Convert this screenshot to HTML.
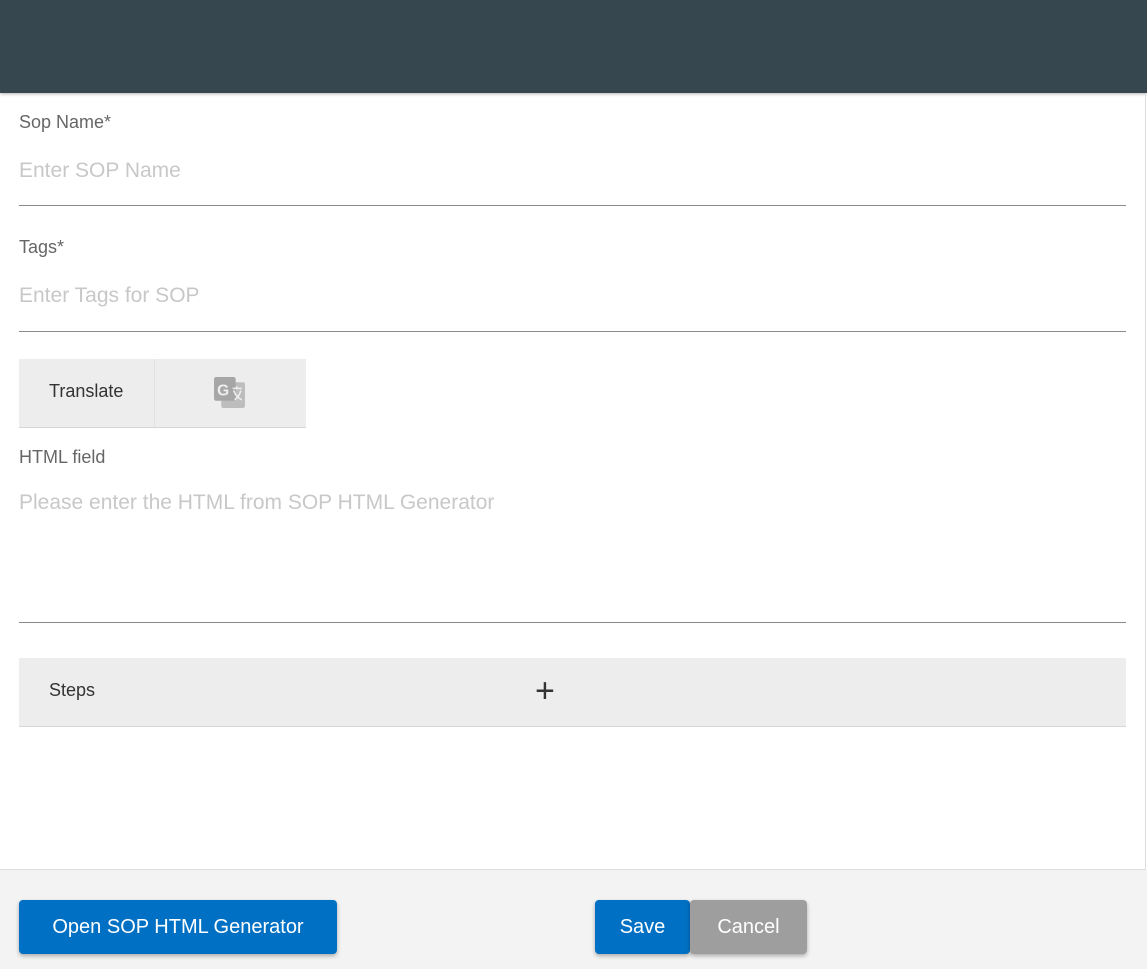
<!DOCTYPE html>
<html><head><style>
*{box-sizing:border-box;margin:0;padding:0}
body{width:1147px;height:969px;overflow:hidden;font-family:"Liberation Sans",Roboto,sans-serif;background:#fff;position:relative}
.hdr{position:absolute;left:0;top:0;width:1147px;height:93px;background:#37474f;box-shadow:0 1px 3px rgba(0,0,0,.3)}
.main{position:absolute;left:0;top:93px;width:1146px;height:777px;border-right:1px solid #ddd;border-bottom:1px solid #ddd}
.lbl{position:absolute;left:19px;font-size:18px;color:#666}
.ph{position:absolute;left:19px;font-size:21px;color:#c8c8c8}
.line{position:absolute;left:19px;width:1107px;height:1px;background:#8a8a8a}
.bar{position:absolute;left:19px;background:#ededed;border-bottom:1px solid #d6d6d6}
.foot{position:absolute;left:0;top:870px;width:1147px;height:99px;background:#f3f3f3}
.btn{position:absolute;top:900px;height:54px;border-radius:4px;color:#fff;font-size:20px;display:flex;align-items:center;justify-content:center;box-shadow:0 2px 4px rgba(0,0,0,.3)}
</style></head><body>
<div class="hdr"></div>
<div class="main"></div>
<div class="lbl" style="top:112px">Sop Name*</div>
<div class="ph" style="top:159px">Enter SOP Name</div>
<div class="line" style="top:205px"></div>
<div class="lbl" style="top:237px">Tags*</div>
<div class="ph" style="top:284px">Enter Tags for SOP</div>
<div class="line" style="top:331px"></div>
<div class="bar" style="top:359px;width:287px;height:69px">
<div style="position:absolute;left:30px;top:22px;font-size:18px;color:#333">Translate</div>
<div style="position:absolute;left:135px;top:0;width:1px;height:68px;background:#e2e2e2"></div>
<svg style="position:absolute;left:194px;top:17px" width="33" height="33" viewBox="0 0 32 32"><rect x="8" y="6" width="23" height="25" rx="2" fill="#bdbdbd"/><rect x="1" y="1" width="21" height="23" rx="2" fill="#a6a6a6"/><text x="4" y="19" font-size="15" font-weight="bold" fill="#eee" font-family="Liberation Sans">G</text><path d="M19 12h9M23 10v3M20 14c2 5 5 8 8 9M27 14c-1 4-3 7-6 9" stroke="#eee" stroke-width="1.5" fill="none"/></svg>
</div>
<div class="lbl" style="top:447px">HTML field</div>
<div class="ph" style="top:491px">Please enter the HTML from SOP HTML Generator</div>
<div class="line" style="top:622px"></div>
<div class="bar" style="top:658px;width:1107px;height:69px">
<div style="position:absolute;left:30px;top:22px;font-size:18px;color:#333">Steps</div>
<div style="position:absolute;left:516px;top:14px;font-size:34px;color:#333;font-weight:300">+</div>
</div>
<div class="foot"></div>
<div class="btn" style="left:19px;width:318px;background:#0070c4">Open SOP HTML Generator</div>
<div class="btn" style="left:595px;width:95px;background:#0070c4">Save</div>
<div class="btn" style="left:690px;width:117px;background:#9e9e9e">Cancel</div>
</body></html>
